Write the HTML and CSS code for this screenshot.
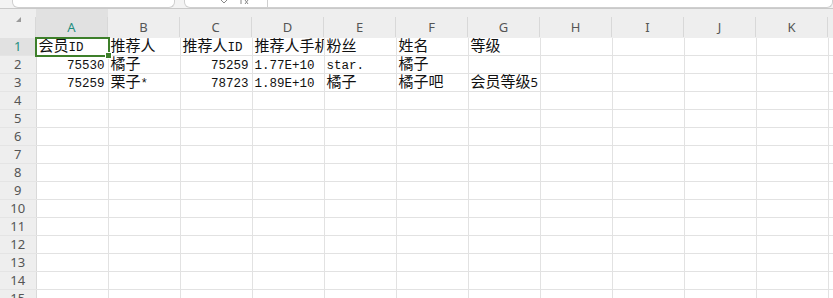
FILE: index.html
```
<!DOCTYPE html>
<html>
  <head>
    <meta charset="UTF-8">
    <title>Sheet1</title>
    <link rel="stylesheet" href="styles.css">
  </head>
  <body>
  <div class="bar">
    <div class="box namebox"></div>
    <div class="box fbox">
      <svg class="fx" width="60" height="7" viewBox="0 0 60 7">
        <path d="M0 0 L3 3 L6 0" fill="none" stroke="#888" stroke-width="1"/>
        <path d="M20 0 L20 4 M24 0 L27 4 M27 0 L24 4" fill="none" stroke="#888" stroke-width="1"/>
      </svg>
      <span class="sep"></span>
    </div>
  </div>

  <table class="sheet">
    <colgroup>
      <col class="rh">
      <col class="c"><col class="c"><col class="c"><col class="c"><col class="c"><col class="c">
      <col class="c"><col class="c"><col class="c"><col class="c"><col class="c"><col class="c">
    </colgroup>
    <tr class="hdr">
      <th class="corner"><div><span class="tri"></span></div></th>
      <th class="on"><div>A</div></th>
      <th><div>B</div></th>
      <th><div>C</div></th>
      <th><div>D</div></th>
      <th><div>E</div></th>
      <th><div>F</div></th>
      <th><div>G</div></th>
      <th><div>H</div></th>
      <th><div>I</div></th>
      <th><div>J</div></th>
      <th><div>K</div></th>
      <th><div></div></th>
    </tr>
    <tr>
      <th class="on">1</th>
      <td class="sel"><span class="zh">会员</span>ID<span class="frame"></span><span class="handle"></span></td>
      <td><span class="zh">推荐人</span></td>
      <td><span class="zh">推荐人</span>ID</td>
      <td><span class="zh">推荐人手机</span></td>
      <td><span class="zh">粉丝</span></td>
      <td><span class="zh">姓名</span></td>
      <td><span class="zh">等级</span></td>
      <td></td><td></td><td></td><td></td><td></td>
    </tr>
    <tr>
      <th>2</th>
      <td class="num">75530</td>
      <td><span class="zh">橘子</span></td>
      <td class="num">75259</td>
      <td>1.77E+10</td>
      <td>star.</td>
      <td><span class="zh">橘子</span></td>
      <td></td>
      <td></td><td></td><td></td><td></td><td></td>
    </tr>
    <tr>
      <th>3</th>
      <td class="num">75259</td>
      <td><span class="zh">栗子</span>*</td>
      <td class="num">78723</td>
      <td>1.89E+10</td>
      <td><span class="zh">橘子</span></td>
      <td><span class="zh">橘子吧</span></td>
      <td><span class="zh">会员等级</span><span class="sans">5</span></td>
      <td></td><td></td><td></td><td></td><td></td>
    </tr>
    <tr><th>4</th><td></td><td></td><td></td><td></td><td></td><td></td><td></td><td></td><td></td><td></td><td></td><td></td></tr>
    <tr><th>5</th><td></td><td></td><td></td><td></td><td></td><td></td><td></td><td></td><td></td><td></td><td></td><td></td></tr>
    <tr><th>6</th><td></td><td></td><td></td><td></td><td></td><td></td><td></td><td></td><td></td><td></td><td></td><td></td></tr>
    <tr><th>7</th><td></td><td></td><td></td><td></td><td></td><td></td><td></td><td></td><td></td><td></td><td></td><td></td></tr>
    <tr><th>8</th><td></td><td></td><td></td><td></td><td></td><td></td><td></td><td></td><td></td><td></td><td></td><td></td></tr>
    <tr><th>9</th><td></td><td></td><td></td><td></td><td></td><td></td><td></td><td></td><td></td><td></td><td></td><td></td></tr>
    <tr><th>10</th><td></td><td></td><td></td><td></td><td></td><td></td><td></td><td></td><td></td><td></td><td></td><td></td></tr>
    <tr><th>11</th><td></td><td></td><td></td><td></td><td></td><td></td><td></td><td></td><td></td><td></td><td></td><td></td></tr>
    <tr><th>12</th><td></td><td></td><td></td><td></td><td></td><td></td><td></td><td></td><td></td><td></td><td></td><td></td></tr>
    <tr><th>13</th><td></td><td></td><td></td><td></td><td></td><td></td><td></td><td></td><td></td><td></td><td></td><td></td></tr>
    <tr><th>14</th><td></td><td></td><td></td><td></td><td></td><td></td><td></td><td></td><td></td><td></td><td></td><td></td></tr>
    <tr><th>15</th><td></td><td></td><td></td><td></td><td></td><td></td><td></td><td></td><td></td><td></td><td></td><td></td></tr>
  </table>
  </body>
</html>
```

FILE: styles.css
```
body {
  margin: 0;
  background-color: #fff;
  overflow: hidden;
  font-family: "Liberation Mono", "Noto Sans CJK SC", monospace;
}

.bar {
  height: 8px;
  background-color: #f3f3f3;
  border-bottom: 1px solid #c9c9c9;
  display: flex;
  gap: 9px;
  padding-left: 12px;
  overflow: hidden;
}
.box {
  background-color: #fff;
  border: 1px solid #cfcfcf;
  border-top: none;
  border-radius: 0 0 6px 6px;
  height: 7px;
  position: relative;
  overflow: hidden;
}
.namebox { width: 161px; }
.fbox { flex: 1; }
.fx {
  position: absolute;
  left: 36px;
  top: 0;
}
.sep {
  position: absolute;
  left: 82px;
  top: 0;
  height: 7px;
  border-left: 1px solid #cfcfcf;
}

.sheet {
  border-collapse: collapse;
  table-layout: fixed;
  width: 900px;
}
col.rh { width: 36px; }
col.c { width: 72px; }

.sheet th {
  background-color: #eeeeee;
  font-family: "Noto Sans", "Open Sans", sans-serif;
  font-weight: normal;
  font-size: 13px;
  color: #555;
  padding: 0;
  height: 17px;
  line-height: 17px;
  border-right: 1px solid #d9d9d9;
  border-bottom: 1px solid #e4e4e4;
  text-align: center;
}
.sheet th.on {
  background-color: #e1e1e1;
  color: #1f8e80;
}

.hdr th {
  height: 27px;
  vertical-align: bottom;
  border-right: none;
  border-bottom: 1px solid #eeeeee;
}
.hdr th div {
  height: 20px;
  line-height: 20px;
  border-right: 1px solid #d8d8d8;
  box-sizing: border-box;
}
.tri {
  display: block;
  width: 0;
  height: 0;
  margin: 8px 0 0 16px;
  border-left: 5px solid transparent;
  border-bottom: 5px solid #9a9a9a;
}

.sheet td {
  height: 17px;
  padding: 0 3px 0 2px;
  border-right: 1px solid #e2e2e2;
  border-bottom: 1px solid #e2e2e2;
  font-size: 12.5px;
  line-height: 14px;
  color: #111;
  white-space: nowrap;
  overflow: hidden;
  vertical-align: bottom;
  text-overflow: clip;
}
.sheet td.num { text-align: right; }
.zh {
  font-family: "Noto Sans CJK SC", sans-serif;
  font-size: 15px;
  line-height: 14px;
}
.sans {
  font-family: "Noto Sans", sans-serif;
  font-size: 13px;
  line-height: 14px;
}

.sel { position: relative; overflow: visible !important; }
.frame {
  position: absolute;
  left: -2px;
  top: -1px;
  right: -2px;
  bottom: -2px;
  border: 2px solid #3d7f2a;
}
.handle {
  position: absolute;
  right: -4px;
  bottom: -4px;
  width: 5px;
  height: 5px;
  background-color: #3d7f2a;
  border: 1px solid #fff;
}
```
